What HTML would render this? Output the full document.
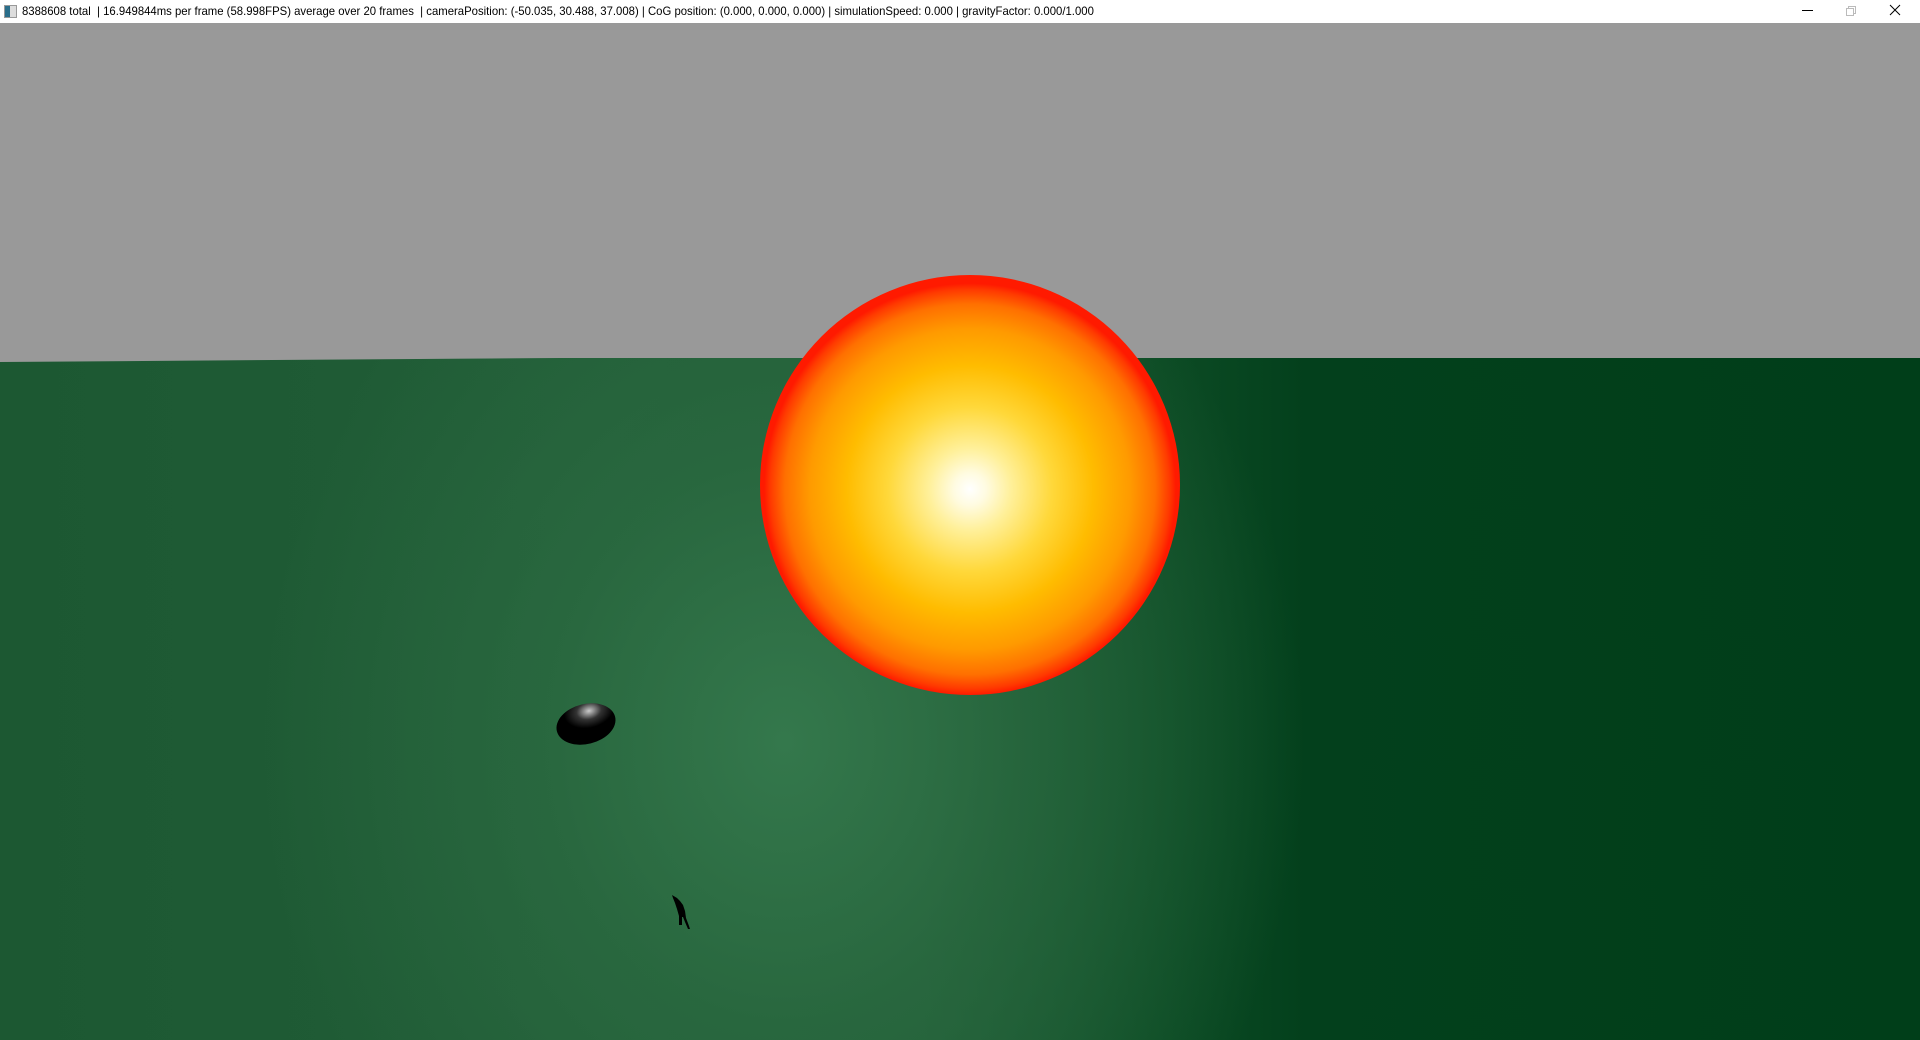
<!DOCTYPE html>
<html><head><meta charset="utf-8"><style>
html,body{margin:0;padding:0;width:1920px;height:1040px;overflow:hidden;background:#999}
#tb{position:absolute;left:0;top:0;width:1920px;height:23px;background:#fff;}
#tt{position:absolute;left:22px;top:4px;font:12px "Liberation Sans",sans-serif;color:#000;white-space:nowrap;transform-origin:0 0;transform:scaleX(0.945)}
#ic{position:absolute;left:4px;top:5px;width:11px;height:11px;border:1px solid #999;background:linear-gradient(90deg,#2a6e8a 0 5px,#ddd 5px)}
#sky{position:absolute;left:0;top:23px;width:1920px;height:340px;background:#999}
#g{position:absolute;left:0;top:358px;width:1920px;height:682px;
 clip-path:polygon(0 4px,560px 0,1920px 0,1920px 682px,0 682px);
 background:
 radial-gradient(ellipse 520px 620px at 784px 384px, rgba(52,120,76,1) 0%, rgba(44,108,66,0.7) 45%, rgba(30,90,52,0) 100%),
 linear-gradient(90deg,#1c5832 0%,#215d37 30%,#1f5b35 48%,#0d4c25 60%,#03401c 68%,#003e19 100%);}
#s{position:absolute;left:760px;top:275px;width:420px;height:420px;border-radius:50%;
 background:radial-gradient(circle closest-side at 50% 51%,#fff 0%,#fffbe0 8%,#fff09a 20%,#ffd83a 40%,#ffbc00 60%,#ff9a00 78%,#ff7000 90%,#ff3a00 97%,#ff1a00 100%)}
</style></head><body>
<div id="tb"><div id="ic"></div><div id="tt">8388608 total &nbsp;| 16.949844ms per frame (58.998FPS) average over 20 frames &nbsp;| cameraPosition: (-50.035, 30.488, 37.008) | CoG position: (0.000, 0.000, 0.000) | simulationSpeed: 0.000 | gravityFactor: 0.000/1.000</div>
<svg style="position:absolute;left:1780px;top:0" width="140" height="23">
<line x1="22" y1="10.5" x2="33" y2="10.5" stroke="#000" stroke-width="1"/>
<g stroke="#bbb" fill="none"><rect x="66.5" y="8.5" width="7" height="7"/><path d="M68.5 8.5V6.5h7v7h-2"/></g>
<path d="M110 5l10 10M120 5l-10 10" stroke="#000" stroke-width="1"/>
</svg></div>
<div id="sky"></div>
<div id="g"></div>
<div id="s"></div>
<svg style="position:absolute;left:0;top:0" width="1920" height="1040">
<defs><radialGradient id="eg" cx="0.6" cy="0.2" r="0.7"><stop offset="0" stop-color="#ccc"/><stop offset="0.3" stop-color="#333"/><stop offset="0.6" stop-color="#000"/></radialGradient></defs>
<ellipse cx="586" cy="724" rx="30" ry="20" transform="rotate(-14 586 724)" fill="url(#eg)"/>
<path d="M672 895l5 3 3 3 3 4 2 6 1 7 3 8 1 3-2 0-3-7-2-5-1 0 0 8-3 0 0-9-2-7-2-6-2-5z" fill="#000"/>
</svg>
</body></html>
